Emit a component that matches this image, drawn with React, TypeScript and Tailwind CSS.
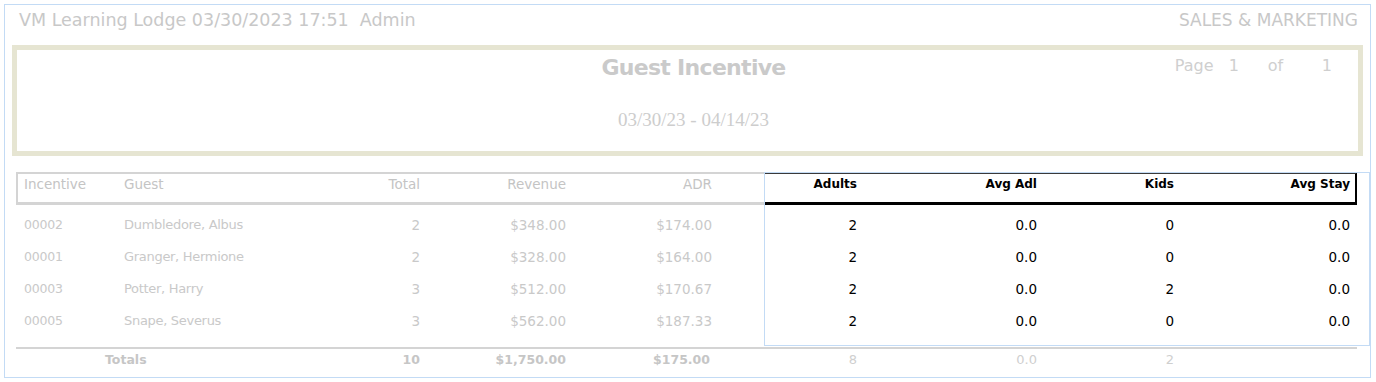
import React from "react";

type Row = {
  id: string;
  guest: string;
  total: string;
  revenue: string;
  adr: string;
  adults: string;
  avgAdl: string;
  kids: string;
  avgStay: string;
};

const rows: Row[] = [
  { id: "00002", guest: "Dumbledore, Albus", total: "2", revenue: "$348.00", adr: "$174.00", adults: "2", avgAdl: "0.0", kids: "0", avgStay: "0.0" },
  { id: "00001", guest: "Granger, Hermione", total: "2", revenue: "$328.00", adr: "$164.00", adults: "2", avgAdl: "0.0", kids: "0", avgStay: "0.0" },
  { id: "00003", guest: "Potter, Harry", total: "3", revenue: "$512.00", adr: "$170.67", adults: "2", avgAdl: "0.0", kids: "2", avgStay: "0.0" },
  { id: "00005", guest: "Snape, Severus", total: "3", revenue: "$562.00", adr: "$187.33", adults: "2", avgAdl: "0.0", kids: "0", avgStay: "0.0" },
];

const leftCols = "grid grid-cols-[100px_200px_107px_146px_146px_47px]";
const rightCols = "grid grid-cols-[97px_180px_137px_176px]";

const ReportHeader = () => (
  <div className="flex justify-between items-start h-[40px] pt-[4px] pl-[14px] pr-[12px] leading-[22px] text-[#c8c8c8]">
    <span className="text-[17.5px]">VM Learning Lodge 03/30/2023 17:51&nbsp; Admin</span>
    <span className="text-[17px]">SALES &amp; MARKETING</span>
  </div>
);

const TitleBox = () => (
  <div className="mx-[7px] h-[111px] border-[5px] border-[#e6e5d2] grid grid-cols-[1fr_auto_1fr]">
    <div />
    <div className="flex flex-col items-center pl-[12px]">
      <div className="mt-[4px] text-[22px] leading-[28px] font-bold tracking-[-0.7px] text-[#cacaca]">
        Guest Incentive
      </div>
      <div className="mt-[27px] font-['Liberation_Serif',serif] text-[19px] leading-[22px] text-[#cdcdcd]">
        03/30/23 - 04/14/23
      </div>
    </div>
    <div className="flex justify-end pr-[26px] pt-[5px] text-[16px] leading-[22px] text-[#cfcfcf]">
      <span className="w-[54px]">Page</span>
      <span className="w-[39px]">1</span>
      <span className="w-[54px]">of</span>
      <span>1</span>
    </div>
  </div>
);

const LeftTable = () => (
  <div className="w-[748px] shrink-0">
    <div className={`${leftCols} h-[33px] border-l-2 border-t-2 border-b-[3px] border-[#d4d4d4] pt-[2px] text-[13.5px] leading-[16px] text-[#c4c4c4]`}>
      <span className="pl-[6px]">Incentive</span>
      <span className="pl-[6px]">Guest</span>
      <span className="text-right pr-[5px]">Total</span>
      <span className="text-right pr-[5px]">Revenue</span>
      <span className="text-right pr-[5px]">ADR</span>
      <span />
    </div>
    <div className="pt-[4px] pl-[2px] text-[#c9c9c9]">
      {rows.map((r) => (
        <div key={r.id} className={`${leftCols} h-[32px] items-center leading-[16px]`}>
          <span className="pl-[6px] text-[12.5px] tracking-[-0.2px]">{r.id}</span>
          <span className="pl-[6px] text-[13px] tracking-[-0.3px]">{r.guest}</span>
          <span className="text-right pr-[5px] text-[13.5px]">{r.total}</span>
          <span className="text-right pr-[5px] text-[13.5px]">{r.revenue}</span>
          <span className="text-right pr-[5px] text-[13.5px]">{r.adr}</span>
          <span />
        </div>
      ))}
    </div>
  </div>
);

const RightTable = () => (
  <div className="flex-1 border border-[#c3dbf5] pb-[8px]">
    <div className={`${rightCols} w-[592px] h-[32px] border-t border-t-[#3a3a3a] border-r-2 border-r-black border-b-[3px] border-b-black pt-[2px] text-[12px] leading-[16px] font-bold text-black`}>
      <span className="text-right pr-[5px]">Adults</span>
      <span className="text-right pr-[5px]">Avg Adl</span>
      <span className="text-right pr-[5px]">Kids</span>
      <span className="text-right pr-[5px]">Avg Stay</span>
    </div>
    <div className="pt-[4px] text-[13.5px] text-black">
      {rows.map((r) => (
        <div key={r.id} className={`${rightCols} w-[590px] h-[32px] items-center leading-[16px]`}>
          <span className="text-right pr-[5px]">{r.adults}</span>
          <span className="text-right pr-[5px]">{r.avgAdl}</span>
          <span className="text-right pr-[5px]">{r.kids}</span>
          <span className="text-right pr-[5px]">{r.avgStay}</span>
        </div>
      ))}
    </div>
  </div>
);

const TotalsRow = () => (
  <div className="ml-[11px] mt-[1px] w-[1341px] h-[24px] border-t-2 border-[#d4d4d4] pl-[2px] grid grid-cols-[100px_200px_107px_146px_146px_48px_97px_180px_137px_176px] items-center leading-[16px]">
    <span className="col-span-2 pl-[87px] text-[12.5px] font-bold text-[#c6c6c6]">Totals</span>
    <span className="text-right pr-[5px] text-[12.5px] font-bold text-[#c6c6c6]">10</span>
    <span className="text-right pr-[5px] text-[12.5px] font-bold text-[#c6c6c6]">$1,750.00</span>
    <span className="text-right pr-[7px] text-[12.5px] font-bold text-[#c6c6c6]">$175.00</span>
    <span />
    <span className="text-right pr-[5px] text-[13px] text-[#cfcfcf]">8</span>
    <span className="text-right pr-[5px] text-[13px] text-[#cfcfcf]">0.0</span>
    <span className="text-right pr-[5px] text-[13px] text-[#cfcfcf]">2</span>
    <span />
  </div>
);

export default function App() {
  return (
    <div className="w-[1376px] h-[382px] bg-white p-[4px] font-['DejaVu_Sans',sans-serif]">
      <div className="h-[374px] w-[1367px] border border-[#c3dbf5]">
        <ReportHeader />
        <TitleBox />
        <div className="flex items-stretch mt-[16px] ml-[11px]">
          <LeftTable />
          <RightTable />
        </div>
        <TotalsRow />
      </div>
    </div>
  );
}
